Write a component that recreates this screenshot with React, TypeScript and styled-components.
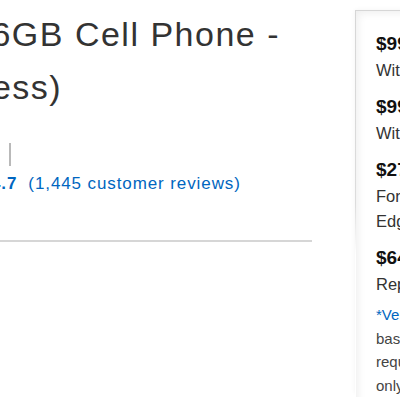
import React from "react";
import styled, { createGlobalStyle } from "styled-components";

const GlobalStyle = createGlobalStyle`
  html, body {
    margin: 0;
    padding: 0;
    background: #ffffff;
    overflow: hidden;
  }
  body {
    font-family: "Liberation Sans", Arial, Helvetica, sans-serif;
  }
`;

const Page = styled.div`
  display: flex;
  align-items: flex-start;
  width: 400px;
  height: 400px;
  overflow: hidden;
`;

const Main = styled.div`
  flex: 0 0 312px;
  display: flex;
  flex-direction: column;
`;

const Title = styled.h1`
  margin: 8px 0 0;
  font-size: 34px;
  font-weight: 400;
  letter-spacing: 1.5px;
  line-height: 53px;
  color: #333333;
`;

const TitleLine = styled.span<{ $shift: number }>`
  display: block;
  white-space: nowrap;
  margin-left: ${(p) => p.$shift}px;
`;

const StarsRow = styled.div`
  display: flex;
  align-items: center;
  gap: 20px;
  height: 24px;
  margin: 28px 0 0 -96px;
`;

const Stars = styled.span`
  font-size: 18px;
  letter-spacing: 1px;
  color: #ffa41c;
  white-space: nowrap;
`;

const Separator = styled.span`
  width: 2px;
  height: 23px;
  background: #b9b9b9;
`;

const ReviewRow = styled.div`
  display: flex;
  align-items: baseline;
  gap: 11px;
  margin: 8px 0 0 -9px;
  font-size: 17px;
  letter-spacing: 0.9px;
  line-height: 20px;
  color: #0066c0;
  white-space: nowrap;
`;

const Score = styled.span`
  font-weight: 700;
`;

const Divider = styled.div`
  margin-top: 46px;
  height: 2px;
  background: #d6d6d6;
`;

const Panel = styled.aside`
  flex: 0 0 300px;
  margin: 10px 0 0 43px;
  padding: 19px 0 0 20px;
  border-style: solid;
  border-width: 1px 0 0 1px;
  border-image: linear-gradient(to bottom, #d6d6d6 0%, #dcdcdc 50%, rgba(255, 255, 255, 0) 63%) 1;
  box-shadow:
    inset 6px 6px 8px -4px rgba(0, 0, 0, 0.07),
    -2px -2px 5px -2px rgba(0, 0, 0, 0.05);
  display: flex;
  flex-direction: column;
`;

const Offer = styled.div`
  display: flex;
  flex-direction: column;
  margin-bottom: 10px;
  white-space: nowrap;
`;

const Price = styled.span`
  font-size: 19px;
  font-weight: 700;
  line-height: 28px;
  color: #111111;
`;

const Desc = styled.span`
  font-size: 16.5px;
  line-height: 25px;
  color: #333333;
`;

const Footnote = styled.p`
  margin: -4px 0 0;
  font-size: 15px;
  line-height: 23.5px;
  color: #444444;
  white-space: nowrap;
`;

const FootLink = styled.span`
  color: #0066c0;
`;

const offers = [
  { price: "$99.99*", lines: ["With new 2-year contract"] },
  { price: "$99.99*", lines: ["With 2-year contract upgrade"] },
  { price: "$27.08/mo*", lines: ["For 24 months on Verizon", "Edge device payment plan"] },
  { price: "$649.99", lines: ["Replace without contract"] },
];

export default function App() {
  return (
    <>
      <GlobalStyle />
      <Page>
        <Main>
          <Title>
            <TitleLine $shift={-29}>16GB Cell Phone -</TitleLine>
            <TitleLine $shift={-93}>Wireless)</TitleLine>
          </Title>
          <StarsRow>
            <Stars>★★★★★</Stars>
            <Separator />
          </StarsRow>
          <ReviewRow>
            <Score>4.7</Score>
            <span>(1,445 customer reviews)</span>
          </ReviewRow>
          <Divider />
        </Main>
        <Panel>
          {offers.map((o, i) => (
            <Offer key={i}>
              <Price>{o.price}</Price>
              {o.lines.map((l) => (
                <Desc key={l}>{l}</Desc>
              ))}
            </Offer>
          ))}
          <Footnote>
            <FootLink>*Verizon pricing</FootLink>
            <br />
            based on plan and
            <br />
            requires activation
            <br />
            only in select areas
          </Footnote>
        </Panel>
      </Page>
    </>
  );
}
